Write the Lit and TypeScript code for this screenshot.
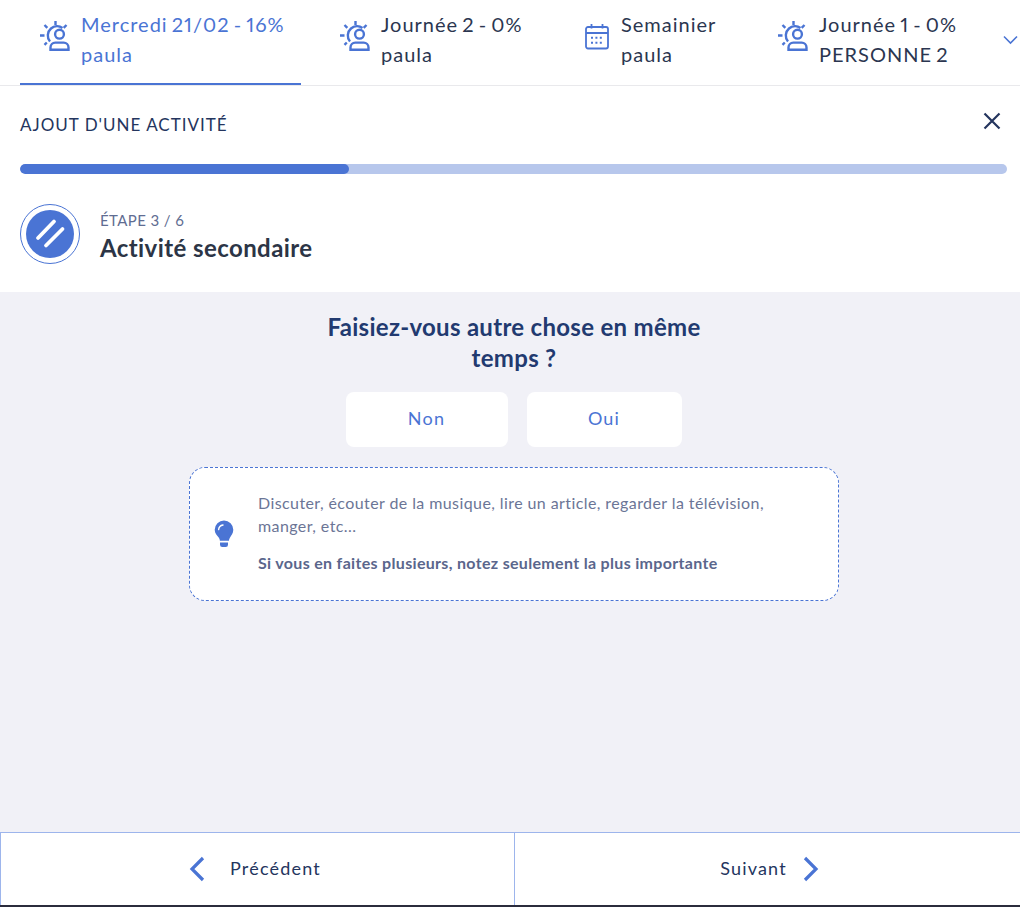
import { LitElement, html, css, svg } from "lit";
import { customElement } from "lit/decorators.js";

const sunIcon = svg`<svg class="ico" viewBox="0 0 32 30" fill="none" stroke="#4a74d4" stroke-width="2.4">
  <path d="M16.5 0v4M5.5 4l2.8 2.8M27.5 4l-2.8 2.8M1 14.5h4.5M7.8 21.5l-2.3 2.3"/>
  <path d="M11 20.5a9.3 9.3 0 0 1 1-13 9.3 9.3 0 0 1 11.5-.6"/>
  <circle cx="20.5" cy="13.2" r="4.4"/>
  <path d="M11.5 28.8v-2.4a4.8 4.8 0 0 1 4.8-4.8h8.4a4.8 4.8 0 0 1 4.8 4.8v2.4z"/>
</svg>`;

const calIcon = svg`<svg class="ico cal" viewBox="0 0 24 26" fill="none" stroke="#4a74d4" stroke-width="1.8">
  <rect x="1" y="3.5" width="22" height="21.5" rx="2"/>
  <path d="M1 9.5h22M6.5 0.5v4.5M17.5 0.5v4.5"/>
  <path stroke-width="2" stroke-dasharray="2 2.4" d="M6 14.2h13M6 19.2h13"/>
</svg>`;

@customElement("app-root")
export class AppRoot extends LitElement {
  static styles = css`
    :host { display: flex; flex-direction: column; width: 1020px; height: 907px; overflow: hidden; background: #fff;
      font-family: "Lato", "Noto Sans", sans-serif; color: #2f3a4f; box-sizing: border-box; }
    * { box-sizing: border-box; }
    .tabs { display: grid; grid-template-columns: 281px 221px 179px 1fr; column-gap: 19px; height: 86px; padding-left: 20px;
      border-bottom: 1px solid #e9e9ec; position: relative; flex: none; }
    .tab { display: flex; align-items: flex-start; padding: 9px 0 0 20px; gap: 10px; height: 85px; white-space: nowrap; font-size: 20px; line-height: 30px; letter-spacing: 1px; word-spacing: -2px; font-variant-numeric: proportional-nums; color: #2b3650; }
    .tab.active { color: #4a74d4; border-bottom: 2px solid #4a74d4; }
    .ico { width: 32px; height: 30px; flex: none; margin: 12px 0 0 -1px; }
    .ico.cal { width: 24px; height: 27px; margin: 14px 2px 0 5px; }
    .chev { position: absolute; right: 2px; top: 35px; width: 15px; height: 10px; }
    .head { flex: none; height: 78px; padding: 0 20px; display: flex; align-items: center; justify-content: space-between; font-size: 17px; letter-spacing: 1px; color: #24355e; }
    .head span { margin-top: -2px; }
    .close { width: 18px; height: 18px; margin: -8px -1px 0 0; }
    .bar { flex: none; margin: 0 13px 0 20px; height: 10px; border-radius: 5px; background: #b7c7ec; overflow: hidden; }
    .fill { width: 329px; height: 100%; background: #4a74d4; border-radius: 5px; }
    .step { flex: none; height: 118px; display: flex; align-items: center; padding: 2px 20px 0; gap: 20px; }
    .badge { width: 60px; height: 60px; border-radius: 50%; border: 1px solid #4a74d4; padding: 5px; flex: none; }
    .badge svg { display: block; width: 48px; height: 48px; }
    .step-text { margin-top: 6px; }
    .step-label { font-size: 15px; line-height: 20px; color: #5f6d92; letter-spacing: 0.4px; }
    .step-title { font-size: 24px; line-height: 35px; font-weight: 700; color: #2c3546; letter-spacing: 0.42px; }
    .main { flex: 1; background: #f1f1f7; display: flex; flex-direction: column; align-items: center; padding: 19px 0 0 8px; }
    h1 { margin: 0; width: 400px; text-align: center; font-size: 24px; line-height: 31px; font-weight: 700; color: #223a70; letter-spacing: 0.3px; }
    .btns { display: flex; gap: 19px; margin-top: 19px; margin-left: -1px; }
    .btn { height: 55px; padding-bottom: 3px; background: #fff; border-radius: 8px; display: flex; align-items: center; justify-content: center; font-size: 18px; letter-spacing: 1.2px; color: #4a74d4; }
    .btn.non { width: 162px; }
    .btn.oui { width: 155px; }
    .tip { margin-top: 20px; width: 650px; height: 134px; background: #fff; border: 1px dashed #4a74d4; border-radius: 16px; display: flex; align-items: center; padding: 0 40px 2px 24px; gap: 25px; font-size: 16px; color: #6b7596; }
    .tip svg { width: 20px; height: 28px; flex: none; margin-top: 2px; }
    .tip-text { margin: -2px 0 0 -1px; }
    .tip p { margin: 0; line-height: 23px; letter-spacing: 0.41px; }
    .tip p.b { margin-top: 14px; font-weight: 700; color: #5a668c; letter-spacing: 0.32px; }
    .foot { flex: none; height: 75px; display: grid; grid-template-columns: 515px 1fr; border-bottom: 2px solid #2b2c3c; }
    .nav { border-top: 1px solid #9db5ec; display: flex; align-items: center; justify-content: center; gap: 25px; font-size: 18px; letter-spacing: 1.2px; color: #24355e; }
    .nav span { margin-top: -2px; }
    .nav.prev { border-left: 1px solid #9db5ec; border-right: 1px solid #9db5ec; padding-right: 5px; }
    .nav.next { padding-left: 4px; gap: 16px; }
    .nav svg { width: 16px; height: 26px; }
  `;

  private tab(icon: unknown, l1: string, l2: string, active = false) {
    return html`<div class="tab ${active ? "active" : ""}">${icon}<div>${l1}<br />${l2}</div></div>`;
  }

  render() {
    return html`
      <div class="tabs">
        ${this.tab(sunIcon, "Mercredi 21/02 - 16%", "paula", true)}
        ${this.tab(sunIcon, "Journée 2 - 0%", "paula")}
        ${this.tab(calIcon, "Semainier", "paula")}
        ${this.tab(sunIcon, "Journée 1 - 0%", "PERSONNE 2")}
        <svg class="chev" viewBox="0 0 15 10" fill="none" stroke="#4a74d4" stroke-width="1.6"><path d="M1 1.5l6.5 6.5L14 1.5"/></svg>
      </div>
      <div class="head">
        <span>AJOUT D'UNE ACTIVITÉ</span>
        <svg class="close" viewBox="0 0 18 18" fill="none" stroke="#24355e" stroke-width="2.2"><path d="M1.5 1.5l15 15M16.5 1.5l-15 15"/></svg>
      </div>
      <div class="bar"><div class="fill"></div></div>
      <div class="step">
        <div class="badge">
          <svg viewBox="0 0 48 48">
            <circle cx="24" cy="24" r="24" fill="#4a74d4"/>
            <path d="M12 28L28 11.5M20 35.5L36.5 19" stroke="#fff" stroke-width="3.8" stroke-linecap="round"/>
          </svg>
        </div>
        <div class="step-text">
          <div class="step-label">ÉTAPE 3 / 6</div>
          <div class="step-title">Activité secondaire</div>
        </div>
      </div>
      <div class="main">
        <h1>Faisiez-vous autre chose en même temps ?</h1>
        <div class="btns">
          <div class="btn non">Non</div>
          <div class="btn oui">Oui</div>
        </div>
        <div class="tip">
          <svg viewBox="0 0 20 28">
            <path fill="#4a74d4" d="M10 .5a9.3 9.3 0 0 1 9.3 9.3c0 3.6-2.1 5.6-3.4 8-.6 1-.9 2-1 3H5.9c-.1-1-.4-2-1-3C3.1 15.4.7 13.4.7 9.8A9.3 9.3 0 0 1 10 .5z"/>
            <path fill="#4a74d4" d="M6 22.5h8v2.2a2.3 2.3 0 0 1-2.3 2.3H8.3A2.3 2.3 0 0 1 6 24.7z"/>
            <path fill="none" stroke="#fff" stroke-width="1.4" stroke-linecap="round" d="M4.6 9.6a5.2 5.2 0 0 1 4.4-4.6"/>
          </svg>
          <div class="tip-text">
            <p>Discuter, écouter de la musique, lire un article, regarder la télévision, manger, etc...</p>
            <p class="b">Si vous en faites plusieurs, notez seulement la plus importante</p>
          </div>
        </div>
      </div>
      <div class="foot">
        <div class="nav prev">
          <svg viewBox="0 0 16 26" fill="none" stroke="#4a74d4" stroke-width="3.2"><path d="M14 2L3 13l11 11"/></svg>
          <span>Précédent</span>
        </div>
        <div class="nav next">
          <span>Suivant</span>
          <svg viewBox="0 0 16 26" fill="none" stroke="#4a74d4" stroke-width="3.2"><path d="M2 2l11 11L2 24"/></svg>
        </div>
      </div>
    `;
  }
}
